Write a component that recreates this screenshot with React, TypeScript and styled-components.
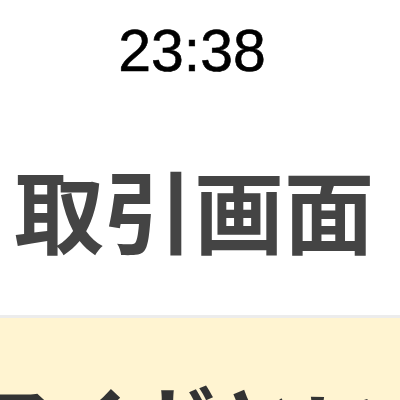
import React from 'react'
import styled, { createGlobalStyle } from 'styled-components'

const GlobalStyle = createGlobalStyle`
    html, body {
        margin: 0;
        padding: 0;
        background: #ffffff;
    }
    body {
        width: 400px;
        height: 400px;
        overflow: hidden;
        font-family: "Liberation Sans", "Noto Sans CJK JP", sans-serif;
    }
`

const Screen = styled.div`
    width: 400px;
    height: 400px;
    display: flex;
    flex-direction: column;
    overflow: hidden;
    background: #ffffff;
`

const StatusBar = styled.div`
    height: 102px;
    display: flex;
    align-items: center;
    justify-content: center;
    padding-right: 16px;
    box-sizing: border-box;
`

const Clock = styled.span`
    font-family: "Liberation Sans", sans-serif;
    font-size: 59px;
    color: #000000;
    -webkit-text-stroke: 0.6px #000;
`

const Header = styled.div`
    height: 213px;
    display: flex;
    align-items: center;
    justify-content: center;
    padding-right: 12px;
    box-sizing: border-box;
`

const Title = styled.h1`
    margin: 0;
    font-family: "Noto Sans CJK JP", sans-serif;
    font-weight: 700;
    font-size: 90px;
    line-height: 1;
    color: #444444;
    padding-bottom: 2px;
`

const Notice = styled.div`
    flex: 1;
    background: #fff4d1;
    border-top: 3px solid #ececec;
    overflow: hidden;
    padding-top: 61px;
`

const NoticeText = styled.p`
    margin: 0 0 0 -38px;
    font-family: "Noto Sans CJK JP", sans-serif;
    font-weight: 700;
    font-size: 86px;
    line-height: 1;
    color: #333333;
    white-space: nowrap;
`

const App: React.FC = () => {
    return (
        <Screen>
            <GlobalStyle />
            <StatusBar>
                <Clock>23:38</Clock>
            </StatusBar>
            <Header>
                <Title>取引画面</Title>
            </Header>
            <Notice>
                <NoticeText>アイガという</NoticeText>
            </Notice>
        </Screen>
    )
}

export default App
